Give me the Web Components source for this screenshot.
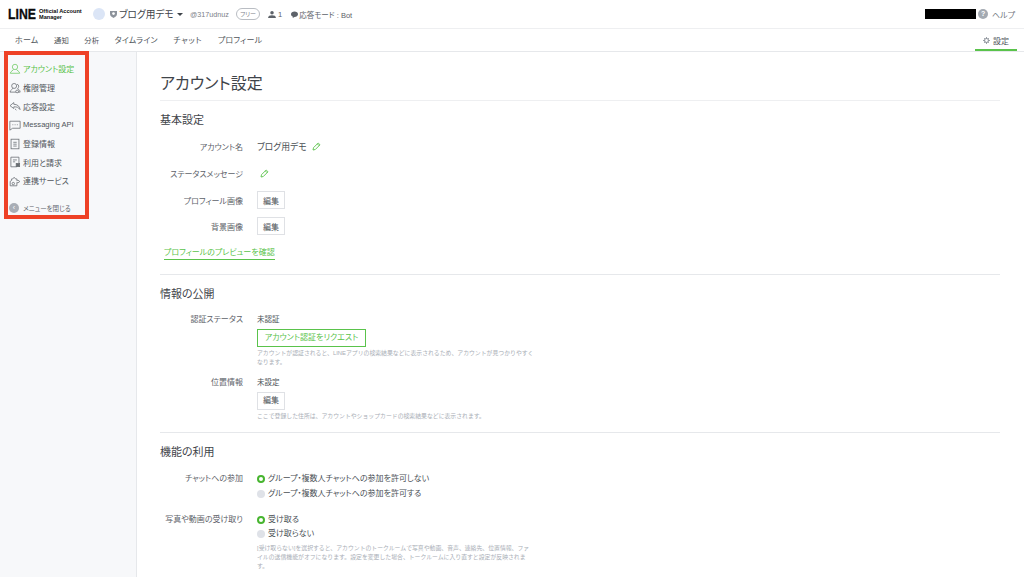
<!DOCTYPE html>
<html lang="ja">
<head>
<meta charset="utf-8">
<title>アカウント設定</title>
<style>
    html, body { margin: 0; padding: 0; height: 100%; overflow: hidden; background: #fff; }
    body {
        width: 1024px;
        height: 577px;
        font-family: "Liberation Sans", "Noto Sans CJK JP", sans-serif;
        color: #4a4f55;
        font-feature-settings: "palt";
        display: flex;
        flex-direction: column;
    }
</style>
</head>
<body>
<oa-header></oa-header>
<oa-tabs></oa-tabs>
<oa-layout>
    <oa-sidenav slot="side">
        <side-item icon="user" active>アカウント設定</side-item>
        <side-item icon="users">権限管理</side-item>
        <side-item icon="reply">応答設定</side-item>
        <side-item icon="chat" style="font-size: 7.6px">Messaging API</side-item>
        <side-item icon="doc">登録情報</side-item>
        <side-item icon="bill">利用と請求</side-item>
        <side-item icon="puzzle">連携サービス</side-item>
    </oa-sidenav>
    <settings-page heading="アカウント設定">
        <setting-section heading="基本設定" style="--rows-top: 5px">
            <setting-row label="アカウント名" height="27"><span>ブログ用デモ</span><edit-pencil></edit-pencil></setting-row>
            <setting-row label="ステータスメッセージ" height="27"><edit-pencil flush></edit-pencil></setting-row>
            <setting-row label="プロフィール画像" height="26"><oa-button>編集</oa-button></setting-row>
            <setting-row label="背景画像" height="26"><oa-button>編集</oa-button></setting-row>
            <preview-link>プロフィールのプレビューを確認</preview-link>
        </setting-section>
        <setting-section heading="情報の公開" style="--rows-top: 12px; padding-bottom: 11px">
            <setting-stack label="認証ステータス">
                <span>未認証</span>
                <oa-button primary>アカウント認証をリクエスト</oa-button>
                <help-text>アカウントが認証されると、LINEアプリの検索結果などに表示されるため、アカウントが見つかりやすく<br>なります。</help-text>
            </setting-stack>
            <setting-stack label="位置情報" style="margin-top: 10px">
                <span>未設定</span>
                <oa-button>編集</oa-button>
                <help-text>ここで登録した住所は、アカウントやショップカードの検索結果などに表示されます。</help-text>
            </setting-stack>
        </setting-section>
        <setting-section heading="機能の利用" last style="--rows-top: 13px">
            <setting-stack label="チャットへの参加" tight>
                <oa-radio checked>グループ・複数人チャットへの参加を許可しない</oa-radio>
                <oa-radio>グループ・複数人チャットへの参加を許可する</oa-radio>
            </setting-stack>
            <setting-stack label="写真や動画の受け取り" tight style="margin-top: 14px">
                <oa-radio checked>受け取る</oa-radio>
                <oa-radio>受け取らない</oa-radio>
                <help-text style="margin-top: 1px">[受け取らない]を選択すると、アカウントのトークルームで写真や動画、音声、連絡先、位置情報、ファ<br>イルの送信機能がオフになります。設定を変更した場合、トークルームに入り直すと設定が反映されま<br>す。</help-text>
            </setting-stack>
        </setting-section>
    </settings-page>
</oa-layout>
<annotation-box></annotation-box>

<script>
const JP_ICONS = {
    user: '<circle cx="7" cy="4.6" r="3.1"/><path d="M5.2 7.4c0 1.4-3.4 2-3.7 4.6h11c-.3-2.6-3.7-3.2-3.7-4.6"/>',
    users: '<circle cx="6" cy="4.6" r="2.9"/><path d="M4.6 7.2c0 1.3-3.1 1.9-3.4 4.6h7"/><path d="M9.4 2.6a2.6 2.6 0 0 1 .6 4.8c.2 1 2.8 1.4 3 4.4h-2.6"/><circle cx="9.5" cy="11" r="1.6"/>',
    reply: '<path d="M5.6 3 1.2 6.6l4.4 3.4V8c3.4-.2 5.4.4 7.3 3.2-.3-3.8-3-6.2-7.3-6.2z"/><path d="M8.6 11.8 7 10.4"/>',
    chat: '<path d="M1 2.6h12v8.2H4.2L1 13z"/><path d="M4 6.7h1M6.6 6.7h1M9.2 6.7h1"/>',
    doc: '<rect x="2.4" y="1.4" width="9.2" height="11.2"/><path d="M5 5h4M5 7.2h4M5 9.4h4"/>',
    bill: '<path d="M9 12.6H2.2V1.4h9.4v7"/><path d="M4.6 4.6h4.6M4.6 6.8h2.6"/><rect x="8.4" y="8.8" width="4" height="3.6" fill="currentColor"/>',
    puzzle: '<path d="M1.4 12.6V7.4l1.6-1V4.6h1.4L6 2.6l1.6 2h1.6v2l1.2-.6 2.2 1.6-2.2 1.6-1.2-.6v4z"/><circle cx="5" cy="10" r="1.4"/>'
};

class OaHeader extends HTMLElement {
    constructor() {
        super();
        this.attachShadow({ mode: 'open' }).innerHTML = `
            <style>
                :host { display: flex; align-items: center; height: 29px; box-sizing: border-box; border-bottom: 1px solid #eeeff1; flex: none; font-size: 7.5px; color: #5d6269; }
                .logo { display: flex; align-items: center; margin-left: 8px; color: #0b0b0b; font-weight: bold; }
                .line { font-size: 14px; line-height: 1; width: 28px; transform: scaleX(.875); transform-origin: left center; -webkit-text-stroke: .3px #0b0b0b; }
                .sub { font-size: 5.6px; line-height: 6px; margin-left: 3px; width: 43px; white-space: nowrap; }
                .avatar { width: 12px; height: 12px; border-radius: 50%; background: #dbe5f6; margin-left: 11px; }
                .shield { margin-left: 5px; width: 7px; height: 8px; }
                .name { font-size: 9.7px; color: #3f444a; margin-left: 2px; width: 55px; white-space: nowrap; }
                .caret { width: 0; height: 0; border: 3px solid transparent; border-top: 3.5px solid #3f444a; border-bottom: 0; margin-left: 3px; }
                .id { margin-left: 7px; color: #7b8087; width: 39px; white-space: nowrap; font-size: 7.2px; }
                .pill { margin-left: 7px; border: 1px solid #b9bdc3; border-radius: 6px; font-size: 6px; height: 10px; line-height: 10px; width: 22px; text-align: center; color: #7b8087; }
                .count { display: flex; align-items: center; gap: 2px; margin-left: 8px; }
                .mode { display: flex; align-items: center; gap: 1px; margin-left: 9px; }
                .right { margin-left: auto; display: flex; align-items: center; margin-right: 9px; }
                .mask { width: 51px; height: 10px; background: #000; }
                .q { width: 10px; height: 10px; border-radius: 50%; background: #a4aab2; color: #fff; font-size: 7px; line-height: 10px; text-align: center; margin-left: 2px; font-weight: bold; }
                .help { margin-left: 4px; color: #70757c; font-size: 8px; }
                svg { display: block; }
            </style>
            <div class="logo"><span class="line">LINE</span><span class="sub">Official Account<br>Manager</span></div>
            <span class="avatar"></span>
            <svg class="shield" viewBox="0 0 8 9"><path d="M0 1h8v3.6C8 7 5.6 8.4 4 9 2.4 8.4 0 7 0 4.6z" fill="#8d939b"/><circle cx="4" cy="4" r="1.5" fill="#fff"/></svg>
            <span class="name">ブログ用デモ</span><span class="caret"></span>
            <span class="id">@317udnuz</span>
            <span class="pill">フリー</span>
            <span class="count"><svg width="8" height="7" viewBox="0 0 9 8"><circle cx="4.5" cy="2" r="2" fill="#5d6269"/><path d="M0 8c0-2.4 2-3.2 4.5-3.2S9 5.600 9 8z" fill="#5d6269"/></svg>1</span>
            <span class="mode"><svg width="7" height="7" viewBox="0 0 8 8"><path d="M4 .6c2.200 0 4 1.300 4 3.100S6.200 6.800 4 6.800L2 8V6.400C.8 5.900 0 4.900 0 3.700 0 1.900 1.800.6 4 .6z" fill="#5d6269"/></svg>応答モード : Bot</span>
            <div class="right"><span class="mask"></span><span class="q">?</span><span class="help">ヘルプ</span></div>
        `;
    }
}

class OaTabs extends HTMLElement {
    constructor() {
        super();
        const tabs = ['ホーム', '通知', '分析', 'タイムライン', 'チャット', 'プロフィール'];
        this.attachShadow({ mode: 'open' }).innerHTML = `
            <style>
                :host { display: flex; align-items: stretch; height: 23px; box-sizing: border-box; border-bottom: 1px solid #e6e8eb; padding-left: 15px; gap: 15.5px; font-size: 8px; color: #50555b; flex: none; }
                span { line-height: 24px; letter-spacing: .2px; }
                .kanji { font-size: 7.4px; letter-spacing: 0; }
                .wide { letter-spacing: .7px; }
                .settings { margin-left: auto; margin-right: 7px; width: 42px; box-sizing: border-box; height: 22px; border-bottom: 2px solid #5ac34b; display: flex; align-items: center; justify-content: center; gap: 3px; padding-top: 2px; }
                .settings span { line-height: normal; letter-spacing: 0; }
            </style>
            ${tabs.map(t => `<span class="${t.length === 2 ? 'kanji' : t === 'チャット' ? 'wide' : ''}">${t}</span>`).join('')}
            <div class="settings">
                <svg width="7" height="7" viewBox="0 0 8 8"><circle cx="4" cy="4" r="2.200" fill="none" stroke="#8d939b" stroke-width="1.200"/><path d="M4 0v1.500M4 6.500V8M0 4h1.500M6.500 4H8M1.200 1.200l1 1M5.800 5.800l1 1M1.200 6.800l1-1M5.800 2.200l1-1" stroke="#8d939b"/></svg>
                <span>設定</span>
            </div>
        `;
    }
}

class OaLayout extends HTMLElement {
    constructor() {
        super();
        this.attachShadow({ mode: 'open' }).innerHTML = `
            <style>
                :host { display: flex; flex: 1; min-height: 0; overflow: hidden; }
                main { flex: 1; min-width: 0; }
            </style>
            <slot name="side"></slot>
            <main><slot></slot></main>
        `;
    }
}

class OaSidenav extends HTMLElement {
    constructor() {
        super();
        this.attachShadow({ mode: 'open' }).innerHTML = `
            <style>
                :host { display: block; width: 137px; box-sizing: border-box; flex: none; background: #f7f8fa; border-right: 1px solid #e6e8eb; padding: 7.500px 0 0 9px; }
                .close { display: flex; align-items: center; margin-top: 8.500px; font-size: 6.500px; color: #5d6269; height: 18px; gap: 4px; }
                .dot { width: 10px; height: 10px; border-radius: 50%; background: #a9aeb6; color: #fff; font-size: 7px; line-height: 9px; text-align: center; }
            </style>
            <slot></slot>
            <div class="close"><span class="dot">‹</span>メニューを閉じる</div>
        `;
    }
}

class SideItem extends HTMLElement {
    constructor() {
        super();
        this.attachShadow({ mode: 'open' }).innerHTML = `
            <style>
                :host { display: flex; align-items: center; gap: 2px; height: 18.700px; font-size: 8px; color: #50555b; }
                :host([active]) { color: #5ac34b; }
                svg { width: 12px; height: 12px; fill: none; stroke: currentColor; stroke-width: .9; flex: none; opacity: .85; }
            </style>
            <svg viewBox="0 0 14 14"></svg><slot></slot>
        `;
    }
    connectedCallback() {
        this.shadowRoot.querySelector('svg').innerHTML = JP_ICONS[this.getAttribute('icon')] || '';
    }
}

class SettingsPage extends HTMLElement {
    constructor() {
        super();
        this.attachShadow({ mode: 'open' }).innerHTML = `
            <style>
                :host { display: block; padding: 21px 24px 0 23px; color: #4a4f55; }
                h1 { margin: 0; font-size: 16px; line-height: 21px; font-weight: 400; color: #3f444a; padding-bottom: 6px; border-bottom: 1px solid #eeeff1; }
            </style>
            <h1></h1>
            <slot></slot>
        `;
    }
    connectedCallback() {
        this.shadowRoot.querySelector('h1').textContent = this.getAttribute('heading');
    }
}

class SettingSection extends HTMLElement {
    constructor() {
        super();
        this.attachShadow({ mode: 'open' }).innerHTML = `
            <style>
                :host { display: block; padding: 11px 0 14px; border-bottom: 1px solid #e6e8eb; }
                :host([last]) { border-bottom: 0; }
                h2 { margin: 0 0 var(--rows-top, 14px); font-size: 11px; line-height: 16px; font-weight: 400; color: #3f444a; }
            </style>
            <h2></h2>
            <slot></slot>
        `;
    }
    connectedCallback() {
        this.shadowRoot.querySelector('h2').textContent = this.getAttribute('heading');
    }
}

class SettingRow extends HTMLElement {
    constructor() {
        super();
        this.attachShadow({ mode: 'open' }).innerHTML = `
            <style>
                :host { display: grid; grid-template-columns: 83px 1fr; column-gap: 14px; align-items: center; font-size: 8.800px; color: #4a4f55; }
                .label { text-align: right; font-size: 8px; color: #5d6269; }
                .value { display: flex; align-items: center; gap: 5px; }
            </style>
            <div class="label"></div><div class="value"><slot></slot></div>
        `;
    }
    connectedCallback() {
        this.shadowRoot.querySelector('.label').textContent = this.getAttribute('label');
        this.style.height = this.getAttribute('height') + 'px';
    }
}

class SettingStack extends HTMLElement {
    constructor() {
        super();
        this.attachShadow({ mode: 'open' }).innerHTML = `
            <style>
                :host { display: grid; grid-template-columns: 83px 1fr; column-gap: 14px; align-items: start; font-size: 7.500px; color: #4a4f55; line-height: 12px; }
                .label { text-align: right; font-size: 8px; color: #5d6269; }
                .value { display: flex; flex-direction: column; align-items: flex-start; gap: 3px; }
                :host([tight]) .value { gap: 2.700px; }
            </style>
            <div class="label"></div><div class="value"><slot></slot></div>
        `;
    }
    connectedCallback() {
        this.shadowRoot.querySelector('.label').textContent = this.getAttribute('label');
    }
}

class OaButton extends HTMLElement {
    constructor() {
        super();
        this.attachShadow({ mode: 'open' }).innerHTML = `
            <style>
                :host { display: inline-flex; align-items: center; justify-content: center; height: 18px; width: 28px; box-sizing: border-box; border: 1px solid #dfe1e5; font-size: 8px; color: #4a4f55; background: #fff; }
                :host([primary]) { width: 109px; border-color: #5ac34b; color: #5ac34b; font-size: 8px; }
            </style>
            <slot></slot>
        `;
    }
}

class EditPencil extends HTMLElement {
    constructor() {
        super();
        this.attachShadow({ mode: 'open' }).innerHTML = `
            <style>
                :host { display: inline-flex; }
                :host([flush]) { margin-left: 3px; }
                svg { width: 9px; height: 9px; fill: none; stroke: #5ac34b; stroke-width: .9; }
            </style>
            <svg viewBox="0 0 9 9"><path d="M1 8l.5-2.300L6.200 1l1.800 1.800L3.300 7.500zM5.300 1.900l1.800 1.800"/></svg>
        `;
    }
}

class PreviewLink extends HTMLElement {
    constructor() {
        super();
        this.attachShadow({ mode: 'open' }).innerHTML = `
            <style>
                :host { display: inline-block; margin: 7px 0 0 4px; font-size: 8px; line-height: 13px; color: #5ac34b; border-bottom: 1px solid #5ac34b; }
            </style>
            <slot></slot>
        `;
    }
}

class HelpText extends HTMLElement {
    constructor() {
        super();
        this.attachShadow({ mode: 'open' }).innerHTML = `
            <style>
                :host { display: block; width: 290px; font-size: 5.860px; line-height: 9px; color: #a9aeb6; margin-top: -1px; font-feature-settings: normal; }
            </style>
            <slot></slot>
        `;
    }
}

class OaRadio extends HTMLElement {
    constructor() {
        super();
        this.attachShadow({ mode: 'open' }).innerHTML = `
            <style>
                :host { display: flex; align-items: center; gap: 3px; height: 12px; font-size: 8px; color: #4a4f55; }
                i { width: 8px; height: 8px; border-radius: 50%; background: #dfe2e8; box-sizing: border-box; flex: none; }
                :host([checked]) i { background: #fff; border: 2.500px solid #47b52f; }
            </style>
            <i></i><slot></slot>
        `;
    }
}

class AnnotationBox extends HTMLElement {
    constructor() {
        super();
        this.attachShadow({ mode: 'open' }).innerHTML = `
            <style>
                :host { position: absolute; left: 4px; top: 51px; width: 85px; height: 168px; box-sizing: border-box; border: 4px solid #ee4126; pointer-events: none; }
            </style>
        `;
    }
}

customElements.define('oa-header', OaHeader);
customElements.define('oa-tabs', OaTabs);
customElements.define('oa-layout', OaLayout);
customElements.define('oa-sidenav', OaSidenav);
customElements.define('side-item', SideItem);
customElements.define('settings-page', SettingsPage);
customElements.define('setting-section', SettingSection);
customElements.define('setting-row', SettingRow);
customElements.define('setting-stack', SettingStack);
customElements.define('oa-button', OaButton);
customElements.define('edit-pencil', EditPencil);
customElements.define('preview-link', PreviewLink);
customElements.define('help-text', HelpText);
customElements.define('oa-radio', OaRadio);
customElements.define('annotation-box', AnnotationBox);
</script>
</body>
</html>
